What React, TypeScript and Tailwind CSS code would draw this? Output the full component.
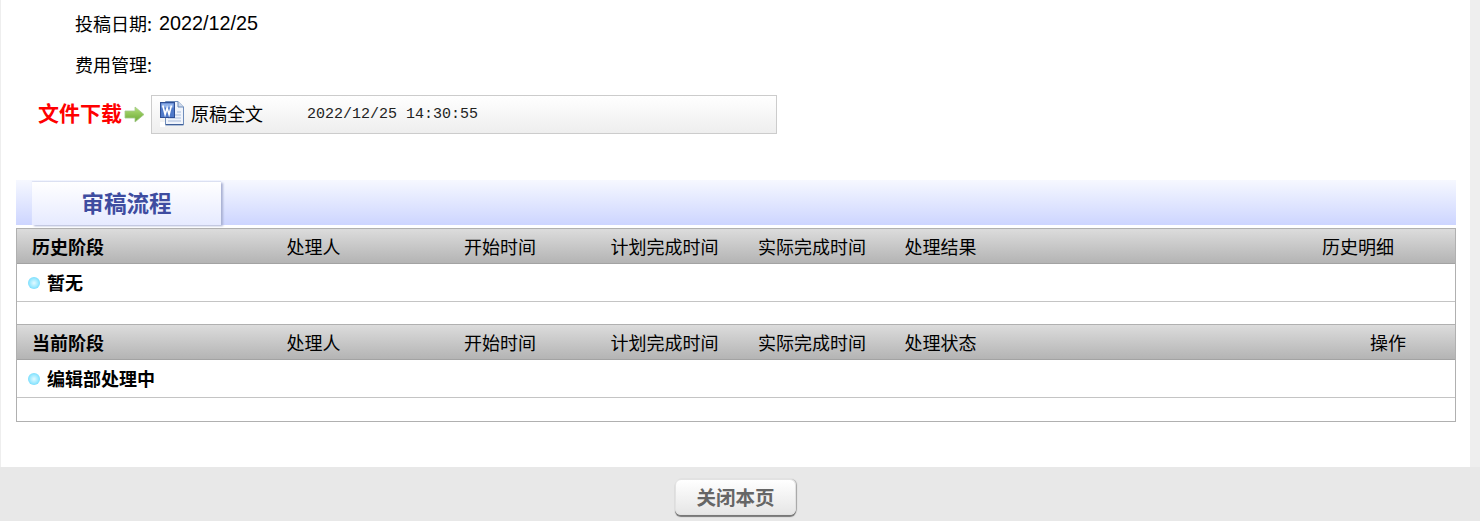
import React from 'react';

const cjk = "font-['Noto_Sans_CJK_SC',sans-serif]";

const WordIcon = () => (
  <svg width="26" height="26" viewBox="0 0 26 26" className="shrink-0">
    <path d="M5.5 0.5h12.5l5.5 5.5v18H5.5z" fill="#f0f4fb" stroke="#6f8dbb" />
    <path d="M18 0.5V6h5.5" fill="#cfdaec" stroke="#6f8dbb" />
    <path d="M6 23.5h17" stroke="#3f5f99" />
    <path d="M8 20h13M8 17h13M15 14h6M17 11h4" stroke="#a9bcdb" />
    <rect x="0.5" y="1.5" width="14" height="15" fill="#4f79c9" stroke="#2f4f95" />
    <rect x="1.5" y="2.5" width="12" height="4" fill="#8fb0e8" />
    <path d="M2.8 4.5l2.3 9 2-6.5 2 6.5 2.3-9" fill="none" stroke="#fff" strokeWidth="1.6" />
    <rect x="0" y="21" width="5" height="5" fill="#fff" />
  </svg>
);

const ArrowIcon = () => (
  <svg width="21" height="17" viewBox="0 0 21 17" className="shrink-0">
    <defs>
      <linearGradient id="arrowFill" x1="0" y1="0" x2="0" y2="1">
        <stop offset="0" stopColor="#b4e07a" />
        <stop offset="1" stopColor="#6aa833" />
      </linearGradient>
    </defs>
    <path d="M1 5h10V1l9 7.5-9 7.5v-4H1z" fill="url(#arrowFill)" stroke="#a3c98a" strokeWidth="0.8" />
  </svg>
);

const Dot = () => (
  <span className="w-[12px] h-[12px] rounded-full shrink-0 bg-[radial-gradient(circle,#e4faff_0%,#9ce9ff_50%,#4fcdf9_100%)]" />
);

const HeaderRow = ({ stage, result, action, actionClass, tall }: {
  stage: string;
  result: string;
  action: string;
  actionClass: string;
  tall?: boolean;
}) => (
  <div className={`flex items-center text-[18px] text-black border-b border-[#a3a3a3] bg-gradient-to-b from-[#dcdcdc] to-[#b4b4b4] ${tall ? 'h-[36px] border-t border-t-[#b0b0b0]' : 'h-[35px]'}`}>
    <span className="w-[270px] pl-[15px] font-bold">{stage}</span>
    <span className="w-[177px] -ml-[0.5px]">处理人</span>
    <span className="w-[147px] ml-[0.5px]">开始时间</span>
    <span className="w-[147px] -ml-[0.5px]">计划完成时间</span>
    <span className="w-[147px] ml-[0.5px]">实际完成时间</span>
    <span className="flex-1 -ml-[0.5px]">{result}</span>
    <span className={actionClass}>{action}</span>
  </div>
);

const StageRow = ({ label }: { label: string }) => (
  <div className="flex items-center gap-[7px] h-[38px] pl-[11px] border-b border-[#c4c4c4] text-[18px] font-bold text-black">
    <Dot />
    <span>{label}</span>
  </div>
);

export default function App() {
  return (
    <div className={`h-[521px] overflow-hidden flex flex-col bg-[#eeeeee] ${cjk}`}>
      <div className="flex-1 ml-px mr-[10px] bg-white flex flex-col pl-[15px] pr-[14px]">
        <div className="flex items-center h-[46px] pl-[59px] text-[18px] text-black">
          <span>投稿日期:</span>
          <span className="ml-[7px] pt-[2px] text-[19.8px] font-['Liberation_Sans',sans-serif]">2022/12/25</span>
        </div>
        <div className="flex items-center h-[36px] pl-[59px] text-[18px] text-black">
          <span>费用管理:</span>
        </div>

        <div className="flex items-center mt-[13px] h-[39px]">
          <span className="ml-[22px] pb-[4px] text-[21px] font-bold text-[#ff0000] whitespace-nowrap">文件下载</span>
          <span className="ml-[2px]"><ArrowIcon /></span>
          <div className="ml-[6px] w-[626px] h-[39px] border border-[#cccccc] bg-gradient-to-b from-white to-[#eeeeee] flex items-center pl-[8px] pb-[2px]">
            <WordIcon />
            <span className="ml-[5px] text-[18px] text-black">原稿全文</span>
            <span className="ml-[44px] pt-[4px] text-[15px] text-[#222222] font-['Liberation_Mono',monospace] whitespace-pre">2022/12/25 14:30:55</span>
          </div>
        </div>

        <div className="mt-[46px] h-[45px] w-[1440px] bg-gradient-to-b from-[#f6f8ff] to-[#cdd5ff] flex items-end pl-[16px]">
          <div className="w-[189px] h-[43px] bg-gradient-to-b from-white to-[#e6eaff] shadow-[2px_1px_2px_#a9b1d4,0_-1px_1px_#dfe3f5,0_1px_0_#ffffff] flex items-center justify-center pb-[1px]">
            <span className="text-[22.5px] font-bold text-[#3e4ca0]">审稿流程</span>
          </div>
        </div>

        <div className="mt-[3px] w-[1440px] h-[194px] border border-[#b0b0b0]">
          <HeaderRow stage="历史阶段" result="处理结果" action="历史明细" actionClass="pr-[61px]" />
          <StageRow label="暂无" />
          <div className="h-[22px]" />
          <HeaderRow stage="当前阶段" result="处理状态" action="操作" actionClass="pr-[49px]" tall />
          <StageRow label="编辑部处理中" />
        </div>
      </div>

      <div className="h-[54px] bg-[#e8e8e8] flex justify-center pt-[12px] pr-[9px]">
        <button className="w-[121px] h-[36px] rounded-[6px] border border-[#e2e2e2] bg-gradient-to-b from-white to-[#e6e6e6] shadow-[0_2px_1px_#777777,1px_0_1px_#aaaaaa] text-[19.5px] font-bold text-[#666666]">
          关闭本页
        </button>
      </div>
    </div>
  );
}
